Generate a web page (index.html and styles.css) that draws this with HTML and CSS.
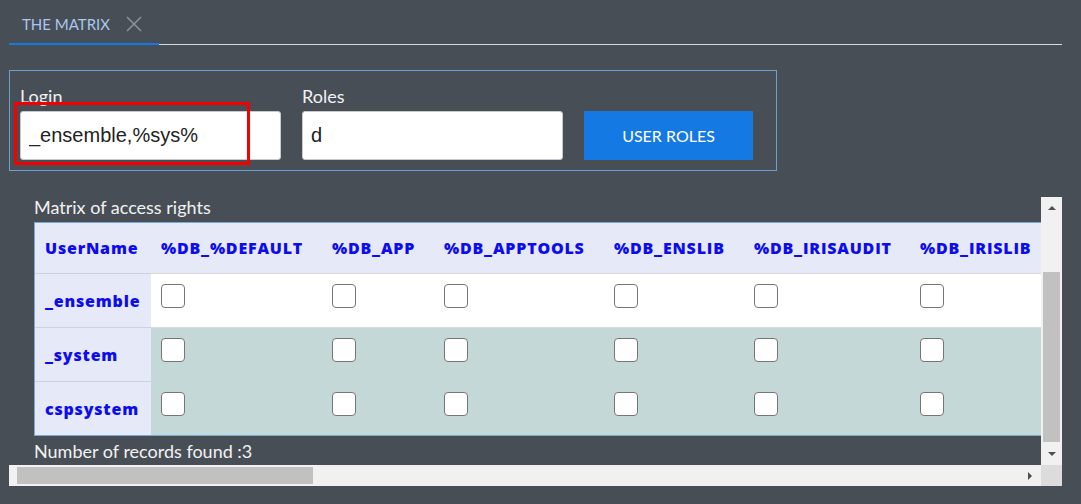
FILE: index.html
```html
<!DOCTYPE html>
<html lang="en">
<head>
<meta charset="utf-8">
<title>The Matrix</title>
<link rel="stylesheet" href="styles.css">
</head>
<body>
<div class="page">
  <div class="tabbar">
    <div class="tab">
      <span class="tab-title">THE MATRIX</span>
      <svg class="tab-close" viewBox="0 0 16 16" width="16" height="16"><path d="M1 1L15 15M15 1L1 15" stroke="#8e9399" stroke-width="1.5" fill="none"/></svg>
    </div>
  </div>

  <div class="filter">
    <div class="field">
      <label class="field-label">Login</label>
      <input class="field-input" type="text" value="_ensemble,%sys%">
      <div class="highlight"></div>
    </div>
    <div class="field">
      <label class="field-label">Roles</label>
      <input class="field-input" type="text" value="d">
    </div>
    <button class="btn-primary">USER ROLES</button>
  </div>

  <div class="scroller">
    <div class="viewport">
      <div class="caption">Matrix of access rights</div>
      <table class="matrix">
        <colgroup>
          <col class="c-user"><col class="c-default"><col class="c-app"><col class="c-apptools"><col class="c-enslib"><col class="c-irisaudit"><col class="c-irislib">
        </colgroup>
        <thead>
          <tr class="head">
            <th>UserName</th><th>%DB_%DEFAULT</th><th>%DB_APP</th><th>%DB_APPTOOLS</th><th>%DB_ENSLIB</th><th>%DB_IRISAUDIT</th><th>%DB_IRISLIB</th>
          </tr>
        </thead>
        <tbody>
          <tr class="row r1">
            <th>_ensemble</th>
            <td><input class="cb" type="checkbox"></td><td><input class="cb" type="checkbox"></td><td><input class="cb" type="checkbox"></td><td><input class="cb" type="checkbox"></td><td><input class="cb" type="checkbox"></td><td><input class="cb" type="checkbox"></td>
          </tr>
          <tr class="row r2">
            <th>_system</th>
            <td><input class="cb" type="checkbox"></td><td><input class="cb" type="checkbox"></td><td><input class="cb" type="checkbox"></td><td><input class="cb" type="checkbox"></td><td><input class="cb" type="checkbox"></td><td><input class="cb" type="checkbox"></td>
          </tr>
          <tr class="row r3">
            <th>cspsystem</th>
            <td><input class="cb" type="checkbox"></td><td><input class="cb" type="checkbox"></td><td><input class="cb" type="checkbox"></td><td><input class="cb" type="checkbox"></td><td><input class="cb" type="checkbox"></td><td><input class="cb" type="checkbox"></td>
          </tr>
        </tbody>
      </table>
      <div class="count">Number of records found :3</div>
    </div>
    <div class="vbar">
      <div class="sb-btn sb-up"><span class="tri-up"></span></div>
      <div class="vtrack"><div class="vthumb"></div></div>
      <div class="sb-btn sb-down"><span class="tri-down"></span></div>
    </div>
    <div class="hbar">
      <div class="hthumb"></div>
      <div class="htrack"></div>
      <div class="sb-btn sb-right"><span class="tri-right"></span></div>
    </div>
    <div class="corner"></div>
  </div>
</div>
</body>
</html>
```
FILE: styles.css
```css
* { box-sizing: border-box; }

html, body {
  margin: 0;
  padding: 0;
}

body {
  background: #474e56;
  font-family: Lato, "Open Sans", sans-serif;
  color: #f2f2f2;
  width: 1081px;
  height: 504px;
  overflow: hidden;
}

/* ---------- tab bar ---------- */
.tabbar {
  display: flex;
  height: 45px;
  margin: 0 19px 0 9px;
  border-bottom: 1px solid #d8dadd;
}

.tab {
  display: flex;
  align-items: center;
  gap: 16px;
  height: 45px;
  padding: 5px 17px 0 13px;
  margin-bottom: -1px;
  border-bottom: 2px solid #1479e2;
}

.tab-title {
  font-size: 15px;
  line-height: 18px;
  color: #a9c7ef;
}

.tab-close {
  display: block;
  width: 16px;
  height: 16px;
}

/* ---------- filter box ---------- */
.filter {
  display: flex;
  align-items: flex-end;
  gap: 21px;
  width: 768px;
  height: 101px;
  margin: 25px 0 0 9px;
  padding: 0 10px 10px;
  border: 1px solid #6d9fd3;
}

.field {
  position: relative;
  display: flex;
  flex-direction: column;
}

.field-label {
  font-size: 18px;
  line-height: 20px;
  margin-bottom: 5px;
  color: #f2f2f2;
}

.field-input {
  width: 261px;
  height: 49px;
  margin: 0;
  padding: 0 8px;
  border: 1px solid #c9c9c9;
  border-radius: 3px;
  background: #fff;
  font-family: "Liberation Sans", Arial, sans-serif;
  font-size: 20px;
  color: #222;
  outline: none;
}

.highlight {
  position: absolute;
  left: -6px;
  top: 16px;
  width: 236px;
  height: 63px;
  border: 3px solid #f40000;
  pointer-events: none;
}

.btn-primary {
  width: 169px;
  height: 49px;
  border: none;
  margin: 0;
  background: #1479e2;
  color: #fff;
  font-family: Lato, "Open Sans", sans-serif;
  font-size: 16px;
  padding: 0;
}

/* ---------- scroll area ---------- */
.scroller {
  display: grid;
  grid-template-columns: 1fr 21px;
  grid-template-rows: 1fr 21px;
  height: 289px;
  margin: 26px 19px 0 9px;
}

.viewport {
  overflow: hidden;
  padding-left: 25px;
  min-width: 0;
}

.caption {
  font-size: 18px;
  line-height: 20px;
  margin-bottom: 5px;
  white-space: nowrap;
  color: #f2f2f2;
}

.matrix {
  table-layout: fixed;
  width: 1016px;
  border-collapse: separate;
  border-spacing: 0;
  border-left: 1px solid #7aa9d9;
  border-top: 1px solid #7aa9d9;
  border-bottom: 1px solid #7aa9d9;
}

.c-user { width: 116px; }
.c-default { width: 171px; }
.c-app { width: 112px; }
.c-apptools { width: 170px; }
.c-enslib { width: 140px; }
.c-irisaudit { width: 166px; }
.c-irislib { width: 140px; }

.matrix th {
  font-family: "Open Sans", sans-serif;
  font-weight: 800;
  font-size: 16px;
  letter-spacing: 0.8px;
  color: #0c0cee;
  text-align: left;
  white-space: nowrap;
  padding: 0 10px;
  background: #e6e9f8;
}

.head { height: 50px; }
.row { height: 54px; }

.row th {
  border-top: 1px solid #cdd3dc;
  vertical-align: middle;
}

.row td {
  vertical-align: top;
  padding: 10px 10px 0;
  border-top: 1px solid #d8dadd;
}

.r1 td { background: #fff; }
.r2 td { background: #c4d8d7; }
.r3 td { background: #c4d8d7; border-top-color: #c4d8d7; }

.cb {
  appearance: none;
  -webkit-appearance: none;
  display: block;
  width: 24px;
  height: 24px;
  margin: 0;
  border: 1px solid #767676;
  border-radius: 4px;
  background: #fff;
}

.count {
  margin-top: 5px;
  font-size: 18px;
  line-height: 20px;
  white-space: nowrap;
  color: #f2f2f2;
}

/* ---------- scrollbars ---------- */
.vbar {
  display: flex;
  flex-direction: column;
  background: #f1f1f1;
}

.sb-btn {
  display: flex;
  flex: none;
}

.sb-up {
  height: 17px;
  align-items: flex-end;
  justify-content: center;
  padding-bottom: 4px;
}

.sb-down {
  height: 17px;
  align-items: flex-start;
  justify-content: center;
  padding-top: 4px;
}

.vtrack {
  flex: 1;
  padding: 58px 2px 0;
}

.vthumb {
  height: 170px;
  background: #c1c1c1;
}

.tri-up {
  width: 0;
  height: 0;
  border-left: 4px solid transparent;
  border-right: 4px solid transparent;
  border-bottom: 4px solid #505050;
}

.tri-down {
  width: 0;
  height: 0;
  border-left: 4px solid transparent;
  border-right: 4px solid transparent;
  border-top: 4px solid #505050;
}

.hbar {
  display: flex;
  background: #f1f1f1;
  padding-left: 8px;
}

.hthumb {
  width: 296px;
  height: 17px;
  margin: 2px 0;
  background: #c1c1c1;
}

.htrack { flex: 1; }

.sb-right {
  width: 17px;
  align-items: center;
  justify-content: flex-start;
  padding-left: 4px;
}

.tri-right {
  width: 0;
  height: 0;
  border-top: 4px solid transparent;
  border-bottom: 4px solid transparent;
  border-left: 4px solid #505050;
}

.corner {
  background: #dcdcdc;
}
```
